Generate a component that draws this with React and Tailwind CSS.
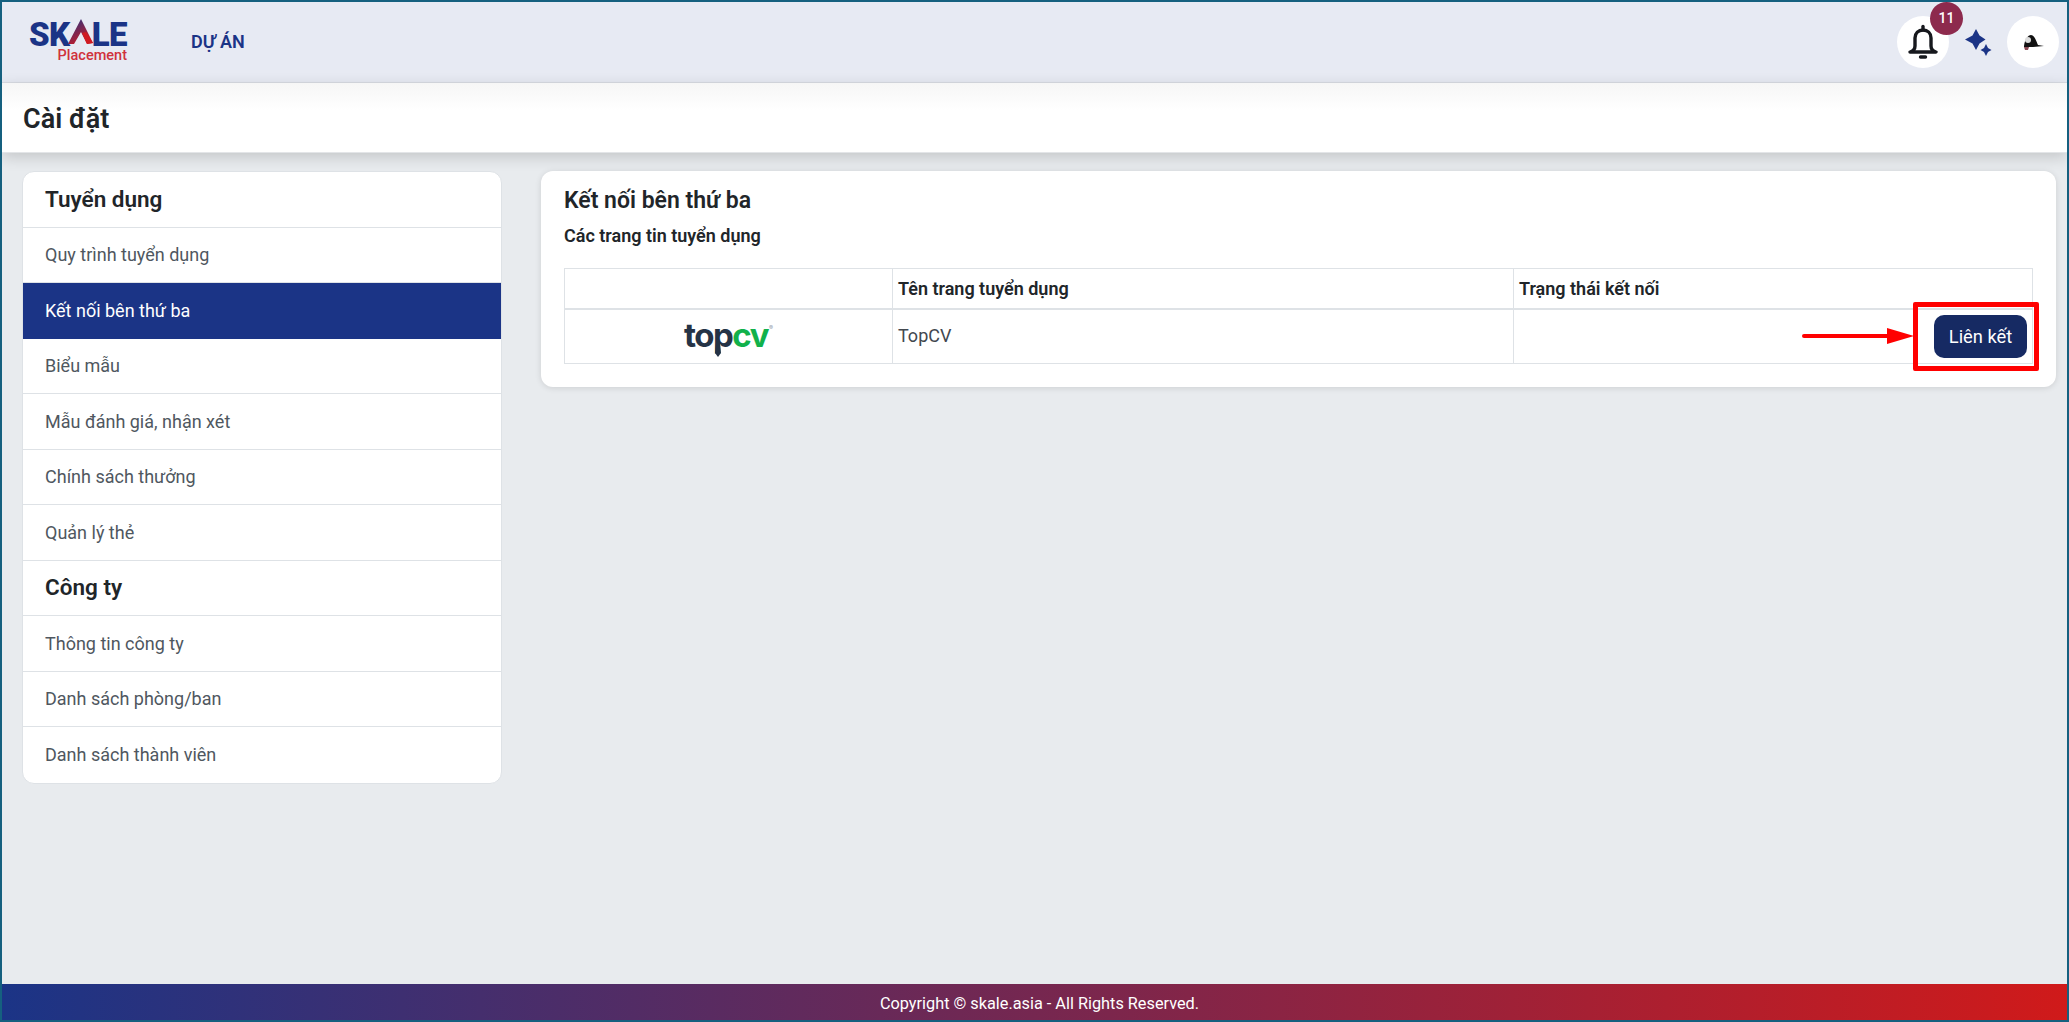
import React from 'react';

const recruit = ['Quy trình tuyển dụng', 'Kết nối bên thứ ba', 'Biểu mẫu', 'Mẫu đánh giá, nhận xét', 'Chính sách thưởng', 'Quản lý thẻ'];
const company = ['Thông tin công ty', 'Danh sách phòng/ban', 'Danh sách thành viên'];

const Logo = () => (
  <div className="flex flex-col items-end w-[98px] font-['Roboto',sans-serif] leading-none">
    <div className="flex items-center h-[27px] text-[33px] font-black text-[#1b3486] tracking-[-0.5px]">
      <span>SK</span>
      <svg width="26" height="27" viewBox="0 0 26 27" className="-mx-[2px] -mt-[5px]">
        <defs>
          <linearGradient id="skale-a" x1="0" y1="0" x2="0.6" y2="1">
            <stop offset="0" stopColor="#1b3486" />
            <stop offset="1" stopColor="#d01a22" />
          </linearGradient>
        </defs>
        <path d="M13 1 L25 25 L19 26 L13 14 L6 26 L0 26 Z" fill="url(#skale-a)" />
        <path d="M14 15 L18 14 L25 25 L19 26 Z" fill="#d01a22" />
      </svg>
      <span>LE</span>
    </div>
    <div className="text-[14.500px] font-medium text-[#d0323c] mt-[1px]">Placement</div>
  </div>
);

const Bell = () => (
  <svg width="30" height="36" viewBox="0 0 30 36" fill="none" stroke="#16181d" strokeWidth="3.4" strokeLinejoin="round" strokeLinecap="round">
    <path d="M15 2.500 V6" />
    <path d="M7 14 C7 9 10.500 6 15 6 C19.500 6 23 9 23 14 V22 C23 25 25 27 28 28 H2 C5 27 7 25 7 22 Z" />
    <path d="M12.500 33 H17.500" />
  </svg>
);

const Sparkles = () => (
  <svg width="27" height="27" viewBox="0 0 27 27" fill="#1b3486">
    <path d="M11 0 L14.500 6.500 L20.500 10.500 L14.500 14.500 L11 21 L7.500 14.500 L0 10.500 L7.500 6.500 Z" />
    <path d="M21 15 L23 19 L26.500 21 L23 23 L21 27 L19 23 L15.500 21 L19 19 Z" />
  </svg>
);

const Avatar = () => (
  <svg width="24" height="20" viewBox="0 0 24 20">
    <path d="M3 14 C4 7 7 3 10 3 C13 3 15 8 17 13 L23 14 L12 15 L3 15 Z" fill="#111" />
    <circle cx="7" cy="8" r="3" fill="#ddd" />
    <path d="M3 15 L8 15 L7 18 L4 18 Z" fill="#8a4a55" />
  </svg>
);

const TopCV = () => (
  <div className="relative inline-flex items-baseline font-['Inter',sans-serif] text-[33px] leading-none font-bold tracking-[-1.5px]">
    <span className="text-[#253346]">top</span>
    <span className="text-[#11b14b]">cv</span>
    <span className="text-[6px] text-gray-400 self-start mt-[6px] ml-[1px] tracking-normal">®</span>
    {/* tie on the p */}
    <svg width="6" height="14" viewBox="0 0 6 14" className="absolute left-[31px] top-[24px]">
      <path d="M1 0 H5 L6 10 L3 14 L0 10 Z" fill="#253346" />
    </svg>
  </div>
);

const SideHeading = ({ children }) => (
  <div className="h-[55.5px] flex items-center px-[22px] pt-[1px] text-[22.500px] font-semibold text-[#212529] border-b border-[#dee2e6]">{children}</div>
);

const SideItem = ({ label, active }) => (
  <div className={active
    ? 'h-[55.5px] flex items-center px-[23px] -mx-px text-white bg-[#1b3486]'
    : 'h-[55.5px] flex items-center px-[22px] text-[#4f5760] border-b border-[#dee2e6] last:border-b-0'}>
    {label}
  </div>
);

export default function App() {
  return (
    <div className="w-[2069px] h-[1022px] flex flex-col overflow-hidden border-2 border-[#15607f] bg-[#e8ebee] font-['Roboto',sans-serif] text-[18px]">
      <header className="h-[81px] shrink-0 flex items-center justify-between pl-[27px] pr-[8px] bg-[#e7eaf3] border-b border-[#d9dce3]">
        <div className="flex items-center gap-[64px]">
          <Logo />
          <span className="text-[18px] font-semibold text-[#1b3486] -mt-[2px]">DỰ ÁN</span>
        </div>
        <div className="flex items-center">
          <div className="relative w-[52px] h-[52px] rounded-full bg-white flex items-center justify-center">
            <Bell />
            <span className="absolute -top-[14px] right-[-14px] w-[33px] h-[33px] rounded-full bg-[#8d2a4d] text-white text-[14px] font-medium flex items-center justify-center">11</span>
          </div>
          <div className="ml-[16px] mr-[15px] flex"><Sparkles /></div>
          <div className="w-[52px] h-[52px] rounded-full bg-white flex items-center justify-center"><Avatar /></div>
        </div>
      </header>

      <div className="h-[70px] shrink-0 flex items-center px-[21px] pt-[3px] bg-gradient-to-b from-[#f6f6f6] to-white to-40% border-b border-[#e3e5e8] shadow-[0_4px_14px_rgba(0,0,0,0.16)] relative">
        <h1 className="text-[27px] font-semibold text-[#212529]">Cài đặt</h1>
      </div>

      <main className="flex-1 flex items-start gap-[39px] pt-[18px] pl-[20px] pr-[11px]">
        <aside className="w-[480px] shrink-0 bg-white rounded-[12px] border border-[#dee2e6] overflow-hidden">
          <SideHeading>Tuyển dụng</SideHeading>
          {recruit.map((label) => (
            <SideItem key={label} label={label} active={label === 'Kết nối bên thứ ba'} />
          ))}
          <SideHeading>Công ty</SideHeading>
          {company.map((label) => (
            <SideItem key={label} label={label} />
          ))}
        </aside>

        <section className="flex-1 bg-white rounded-[12px] shadow-[0_1px_6px_rgba(0,0,0,0.12)] pt-[15px] pb-[23px] px-[23px] text-[#212529]">
          <h2 className="text-[23px] leading-[30px] font-semibold">Kết nối bên thứ ba</h2>
          <h3 className="mt-[8px] text-[18px] leading-[24px] font-semibold">Các trang tin tuyển dụng</h3>
          <table className="mt-[20px] w-full table-fixed border-collapse">
            <thead>
              <tr className="h-[40px] text-left font-semibold border-b-2 border-[#dee2e6]">
                <th className="w-[328px] border border-[#dee2e6] border-b-2"></th>
                <th className="w-[621px] px-[5px] font-semibold border border-[#dee2e6] border-b-2">Tên trang tuyển dụng</th>
                <th className="px-[5px] font-semibold border border-[#dee2e6] border-b-2">Trạng thái kết nối</th>
              </tr>
            </thead>
            <tbody>
              <tr className="h-[55px]">
                <td className="border border-[#dee2e6] text-center"><TopCV /></td>
                <td className="px-[5px] pb-[2px] border border-[#dee2e6] text-[#42484f]">TopCV</td>
                <td className="border border-[#dee2e6]">
                  <div className="flex items-center justify-end">
                    <svg width="112" height="16" viewBox="0 0 112 16" className="shrink-0">
                      <rect x="0" y="6" width="90" height="4" rx="2" fill="#ff0000" />
                      <path d="M85 0 L112 8 L85 16 Z" fill="#ff0000" />
                    </svg>
                    <div className="relative shrink-0 ml-[-1px] mr-[-7px] w-[126px] h-[69px] border-[5px] border-[#ff0000] rounded-[2px] flex items-center justify-end pr-[7px] my-[-8px]">
                      <button className="w-[93px] h-[43px] rounded-[10px] bg-[#162a63] text-white text-[18.300px]">Liên kết</button>
                    </div>
                  </div>
                </td>
              </tr>
            </tbody>
          </table>
        </section>
      </main>

      <footer className="h-[36px] shrink-0 flex items-center justify-center pl-[10px] pt-[5px] bg-linear-to-r/srgb from-[#1b3486] to-[#d01a1a] text-white text-[16.300px] leading-none">
        Copyright © skale.asia - All Rights Reserved.
      </footer>
    </div>
  );
}
